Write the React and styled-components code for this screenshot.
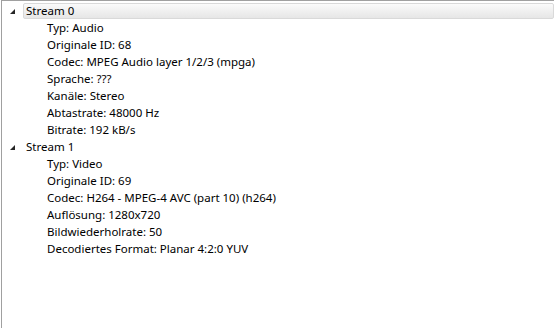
import React from 'react'
import styled, { createGlobalStyle } from 'styled-components'

const Global = createGlobalStyle`
    html, body { margin: 0; padding: 0; background: #fff; }
    body { font-family: "Noto Sans", "Open Sans", sans-serif; }
`;

const Tree = styled.div`
    height: 328px;
    width: 553px;
    margin-left: 1px;
    box-sizing: border-box;
    border-top: 1px solid #a0a0a0;
    border-left: 1px solid #a0a0a0;
    padding-top: 1px;
    font-size: 11.5px;
    color: #000;
    overflow: hidden;
`;

const Row = styled.div`
    display: flex;
    align-items: center;
    height: 17px;
    padding-left: ${p => p.$indent}px;
`;

const Arrow = styled.span`
    width: 0;
    height: 0;
    border-left: 5px solid transparent;
    border-bottom: 5px solid #262626;
    margin-right: 8px;
    margin-top: 1px;
`;

const Label = styled.span`
    display: flex;
    align-items: center;
    height: 16px;
    padding: 0 2px;
    box-sizing: border-box;
    white-space: nowrap;
    border: 1px solid transparent;
    border-radius: 2px;
    ${p => p.$selected && `
        flex: 1;
        border-color: #d9d9d9;
        background: linear-gradient(#fafafa, #e6e6e6);
    `}
`;

const streams = [
    {
        name: 'Stream 0',
        props: [
            'Typ: Audio',
            'Originale ID: 68',
            'Codec: MPEG Audio layer 1/2/3 (mpga)',
            'Sprache: ???',
            'Kanäle: Stereo',
            'Abtastrate: 48000 Hz',
            'Bitrate: 192 kB/s',
        ],
    },
    {
        name: 'Stream 1',
        props: [
            'Typ: Video',
            'Originale ID: 69',
            'Codec: H264 - MPEG-4 AVC (part 10) (h264)',
            'Auflösung: 1280x720',
            'Bildwiederholrate: 50',
            'Decodiertes Format: Planar 4:2:0 YUV',
        ],
    },
]

const App = () => {
    return (
        <>
            <Global />
            <Tree>
                {streams.map((s, i) => (
                    <React.Fragment key={s.name}>
                        <Row $indent={8}>
                            <Arrow />
                            <Label $selected={i === 0}>{s.name}</Label>
                        </Row>
                        {s.props.map(p => (
                            <Row key={p} $indent={42}>
                                <Label>{p}</Label>
                            </Row>
                        ))}
                    </React.Fragment>
                ))}
            </Tree>
        </>
    )
}
export default App
